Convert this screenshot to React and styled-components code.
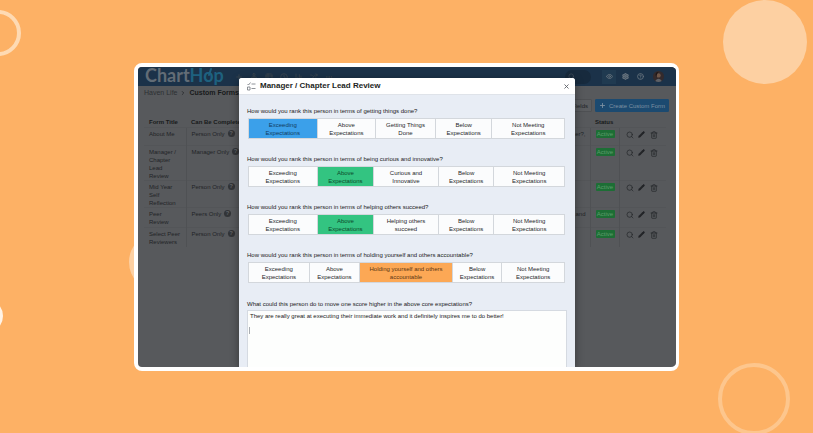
import React from "react";
import styled, { createGlobalStyle, css } from "styled-components";
import {
  Search, Pencil, Trash2, Plus, X, Eye, Settings, CircleHelp, ChevronRight,
  Network, BarChart3, Table2, Clock, Shuffle, Ellipsis,
} from "lucide-react";

const GlobalStyle = createGlobalStyle`
  * { box-sizing: border-box; }
  body {
    margin: 0;
    background: #fdb165;
    font-family: "Liberation Sans", Arial, sans-serif;
    font-size: 6px;
    line-height: 8px;
    color: #222;
  }
  button, textarea { font: inherit; color: inherit; margin: 0; }
`;

const Stage = styled.main`
  position: relative;
  overflow: hidden;
  min-height: 100vh;
  padding: 63px 134px 62px;
`;

const Bubble = styled.span`
  position: absolute;
  border-radius: 50%;
  width: ${(p) => p.$size}px;
  height: ${(p) => p.$size}px;
  ${(p) => p.$place}
  ${(p) => (p.$ring ? css`border: 4px solid ${p.$color};` : css`background: ${p.$color};`)}
`;

const Frame = styled.section`
  position: relative;
  display: grid;
  grid-template-columns: minmax(0, 1fr);
  border: solid #fff;
  border-width: 4px 3px 4px 4px;
  border-radius: 8px;
  background: #57595c;
  overflow: hidden;
`;

const Page = styled.div`
  grid-area: 1 / 1;
  color: #222427;
`;

const NavBar = styled.header`
  display: flex;
  align-items: center;
  height: 19px;
  padding: 0 12px 0 7px;
  background: #1b3249;
`;

const Logo = styled.a`
  position: relative;
  align-self: flex-start;
  width: 90px;
  font-family: Lato, sans-serif;
  font-size: 18px;
  font-weight: 700;
  line-height: 16px;
  color: #626c76;
  text-decoration: none;
  b { font-weight: 700; color: #1e617f; }
`;

const Leaf = styled.svg`
  position: absolute;
  top: 0;
  left: 61px;
  width: 8px;
  height: 12px;
`;

const NavLinks = styled.nav`
  display: flex;
  flex: 1;
  gap: 7px;
`;

const IconButton = styled.button`
  display: grid;
  place-items: center;
  width: ${(p) => p.$size || 8}px;
  height: ${(p) => p.$size || 8}px;
  padding: 0;
  border: 0;
  background: ${(p) => p.$bg || "none"};
  color: ${(p) => p.$color || "#35434f"};
`;

const NavSearch = styled.button`
  display: flex;
  align-items: center;
  width: 26px;
  height: 14px;
  margin-right: 11px;
  padding: 0 3px;
  border: 0;
  border-radius: 7px;
  background: #172a3d;
  color: #46525f;
`;

const NavTools = styled.div`
  display: flex;
  align-items: center;
  gap: 3px;
`;

const Avatar = styled.svg`
  width: 11px;
  height: 11px;
  margin-left: 4px;
`;

const Crumbs = styled.nav`
  display: flex;
  align-items: center;
  gap: 3px;
  padding: 3px 6px 0;
  font-size: 7px;
  a { color: #2d3033; text-decoration: none; }
  strong { color: #17191b; }
`;

const Actions = styled.div`
  display: flex;
  justify-content: flex-end;
  padding: 2px 7px 0 0;
  gap: 3px;
`;

const ActionButton = styled.button`
  display: flex;
  align-items: center;
  justify-content: center;
  gap: 3px;
  height: 13px;
  padding: 0 3px;
  border: 1px solid ${(p) => (p.$primary ? "#1c4a70" : "#4e5053")};
  border-radius: 1px;
  background: ${(p) => (p.$primary ? "#1c4a70" : "#5b5d60")};
  color: ${(p) => (p.$primary ? "#7e91a2" : "#222427")};
  white-space: nowrap;
`;

const FormsTable = styled.table`
  width: calc(100% - 16px);
  margin: 4px 10px 0 6px;
  border-collapse: collapse;
  table-layout: fixed;
  th, td {
    padding: 2px 4px 0 5px;
    text-align: left;
    vertical-align: top;
  }
  th { height: 11px; font-weight: 700; color: #17191b; white-space: nowrap; }
  tbody td { border-top: 1px solid #535558; }
  td + td { border-left: 1px solid #4f5154; }
`;

const Col = styled.col`
  width: ${(p) => (p.$w ? `${p.$w}px` : "auto")};
`;

const Row = styled.tr`
  height: ${(p) => p.$h}px;
`;

const Audience = styled.div`
  display: flex;
  align-items: center;
  gap: 3px;
`;

const Help = styled.span`
  width: 7px;
  height: 7px;
  border-radius: 50%;
  background: #323437;
  color: #626467;
  font-weight: 700;
  line-height: 7px;
  text-align: center;
`;

const Excerpt = styled.div`
  text-align: right;
  white-space: nowrap;
`;

const Badge = styled.span`
  display: block;
  width: 19px;
  border-radius: 1px;
  background: #1d6e35;
  color: #5d9c6d;
  text-align: center;
`;

const RowTools = styled.div`
  display: flex;
  gap: 2px;
`;

const Modal = styled.div`
  grid-area: 1 / 1;
  z-index: 1;
  display: flex;
  flex-direction: column;
  margin: 11px 101px 0;
  border-radius: 3px 3px 0 0;
  background: #e8edf5;
  box-shadow: 0 2px 8px rgba(0, 0, 0, 0.4);
  overflow: hidden;
`;

const ModalHeader = styled.header`
  display: flex;
  align-items: center;
  gap: 4px;
  height: 17px;
  padding: 0 5px 0 8px;
  border-bottom: 1px solid #dfe3e9;
  background: #fff;
`;

const ChecklistIcon = styled.svg`
  width: 9px;
  height: 9px;
`;

const Title = styled.h1`
  flex: 1;
  margin: 0;
  font-size: 8px;
  line-height: 10px;
  color: #1c1e22;
`;

const Form = styled.form`
  display: flex;
  flex-direction: column;
  gap: 16px;
  padding: 12px 8px 0;
`;

const Question = styled.fieldset`
  min-width: 0;
  margin: 0;
  padding: 0;
  border: 0;
  legend { padding: 0; margin-bottom: 3px; white-space: nowrap; }
`;

const Scale = styled.div`
  display: grid;
  grid-template-columns: ${(p) => p.$columns};
  margin: 0 2px 0 1px;
  border: 1px solid #d3d7dc;
`;

const tones = {
  blue: ["#3ba0ea", "#123c5e"],
  green: ["#33c481", "#0c4a2c"],
  orange: ["#fca855", "#5c3612"],
};

const Choice = styled.button`
  height: 19px;
  padding: 0;
  border: 0;
  background: ${(p) => (p.$tone ? tones[p.$tone][0] : "#fbfcfd")};
  color: ${(p) => (p.$tone ? tones[p.$tone][1] : "#26282b")};
  line-height: 8px;
  white-space: pre-line;
  & + & { border-left: 1px solid #d3d7dc; }
`;

const Comment = styled.div`
  position: relative;
  display: flex;
  flex-direction: column;
  gap: 2px;
  padding-top: 1px;
`;

const TextBox = styled.textarea`
  display: block;
  width: 100%;
  height: 57px;
  padding: 1px 2px;
  border: 1px solid #d5dae1;
  border-bottom: 0;
  background: #fdfefd;
  resize: none;
  outline: none;
`;

const Caret = styled.span`
  position: absolute;
  left: 2px;
  top: 28px;
  width: 1px;
  height: 7px;
  background: #a9adb2;
`;

const navIcons = [
  ["Add", Plus], ["Org chart", Network], ["Table", Table2], ["Timeline", Clock],
  ["Reports", BarChart3], ["Changes", Shuffle], ["More", Ellipsis],
];

const rows = [
  { title: "About Me", who: "Person Only", note: "user?,", h: 18 },
  { title: "Manager / Chapter Lead Review", who: "Manager Only", h: 35 },
  { title: "Mid Year Self Reflection", who: "Person Only", h: 27 },
  { title: "Peer Review", who: "Peers Only", note: "and", h: 20 },
  { title: "Select Peer Reviewers", who: "Person Only", h: 20 },
];

const EXCEEDING = "Exceeding\nExpectations";
const ABOVE = "Above\nExpectations";
const BELOW = "Below\nExpectations";
const NOT_MEETING = "Not Meeting\nExpectations";

const questions = [
  { text: "getting things done?", middle: "Getting Things\nDone", picked: 0, tone: "blue", columns: "68fr 59fr 60fr 57fr 73fr" },
  { text: "being curious and innovative?", middle: "Curious and\nInnovative", picked: 1, tone: "green", columns: "68fr 57fr 65fr 56fr 71fr" },
  { text: "helping others succeed?", middle: "Helping others\nsucceed", picked: 1, tone: "green", columns: "68fr 57fr 65fr 56fr 71fr" },
  { text: "holding yourself and others accountable?", middle: "Holding yourself and others\naccountable", picked: 2, tone: "orange", columns: "60fr 51fr 93fr 50fr 63fr" },
];

export default function App() {
  return (
    <Stage>
      <GlobalStyle />
      <Bubble $size={46} $ring $color="#fedab3" $place="left: -25px; top: 10px;" />
      <Bubble $size={84} $color="#fdd0a2" $place="right: 6px; top: 0;" />
      <Bubble $size={72} $ring $color="#fdc68d" $place="right: 23px; bottom: -2px;" />
      <Bubble $size={34} $ring $color="#fff3e6" $place="left: -31px; top: 299px;" />
      <Bubble $size={60} $color="#fdd0a2" $place="left: 129px; top: 232px;" />

      <Frame>
        <Page>
          <NavBar>
            <Logo href="#">
              Chart<b>Hop</b>
              <Leaf viewBox="0 0 8 12" aria-hidden="true">
                <path d="M3 8 L5 2" stroke="#1e617f" strokeWidth="2" strokeLinecap="round" />
              </Leaf>
            </Logo>
            <NavLinks>
              {navIcons.map(([name, Icon]) => (
                <IconButton key={name} type="button" aria-label={name}>
                  <Icon size={8} strokeWidth={3} />
                </IconButton>
              ))}
            </NavLinks>
            <NavSearch type="button" aria-label="Search"><Search size={7} /></NavSearch>
            <NavTools>
              <IconButton type="button" aria-label="View" $size={14} $bg="#203a50" $color="#66727d"><Eye size={7} strokeWidth={3} /></IconButton>
              <IconButton type="button" aria-label="Settings" $size={12} $color="#66727d"><Settings size={7} strokeWidth={4} /></IconButton>
              <IconButton type="button" aria-label="Help" $size={12} $color="#66727d"><CircleHelp size={7} strokeWidth={3} /></IconButton>
              <Avatar viewBox="0 0 10 10" role="img" aria-label="Profile">
                <circle cx="5" cy="5" r="5" fill="#332a2c" />
                <ellipse cx="5" cy="4" rx="2" ry="2" fill="#6f5648" />
                <path d="M2 9 Q5 5 8 9 Q5 11 2 9Z" fill="#5c6067" />
                <path d="M3 6 Q1 1 5 1 Q3 3 3 8Z" fill="#1f1717" />
              </Avatar>
            </NavTools>
          </NavBar>

          <Crumbs aria-label="Breadcrumb">
            <a href="#">Haven Life</a>
            <ChevronRight size={6} strokeWidth={3} />
            <strong>Custom Forms</strong>
          </Crumbs>

          <Actions>
            <ActionButton type="button">Manage Fields</ActionButton>
            <ActionButton type="button" $primary><Plus size={7} strokeWidth={3} />Create Custom Form</ActionButton>
          </Actions>

          <FormsTable>
            <colgroup>
              <Col $w={42} /><Col $w={100} /><Col /><Col $w={29} /><Col $w={47} />
            </colgroup>
            <thead>
              <tr>
                <th>Form Title</th>
                <th>Can Be Completed</th>
                <th aria-label="Questions" />
                <th>Status</th>
                <th aria-label="Actions" />
              </tr>
            </thead>
            <tbody>
              {rows.map((r) => (
                <Row key={r.title} $h={r.h}>
                  <td>{r.title}</td>
                  <td><Audience>{r.who}<Help>?</Help></Audience></td>
                  <td><Excerpt>{r.note}</Excerpt></td>
                  <td><Badge>Active</Badge></td>
                  <td>
                    <RowTools>
                      <IconButton type="button" aria-label="View form" $size={10} $color="#232528"><Search size={8} strokeWidth={2} /></IconButton>
                      <IconButton type="button" aria-label="Edit form" $size={10} $color="#232528"><Pencil size={7} strokeWidth={2} fill="currentColor" /></IconButton>
                      <IconButton type="button" aria-label="Delete form" $size={10} $color="#232528"><Trash2 size={8} strokeWidth={2} /></IconButton>
                    </RowTools>
                  </td>
                </Row>
              ))}
            </tbody>
          </FormsTable>
        </Page>

        <Modal role="dialog" aria-labelledby="review-title">
          <ModalHeader>
            <ChecklistIcon viewBox="0 0 18 18" fill="none" stroke="#6a6f76" strokeWidth="1.5" aria-hidden="true">
              <path d="M1 4 L3 6 L7 1 M9 4 H17 M9 13 H17 M1 10 H6 V16 H1 Z" />
            </ChecklistIcon>
            <Title id="review-title">Manager / Chapter Lead Review</Title>
            <IconButton type="button" aria-label="Close" $color="#5a5e65"><X size={7} strokeWidth={3} /></IconButton>
          </ModalHeader>
          <Form>
            {questions.map((q) => (
              <Question key={q.text}>
                <legend>How would you rank this person in terms of {q.text}</legend>
                <Scale $columns={q.columns}>
                  {[EXCEEDING, ABOVE, q.middle, BELOW, NOT_MEETING].map((label, i) => (
                    <Choice
                      key={label}
                      type="button"
                      aria-pressed={i === q.picked}
                      $tone={i === q.picked ? q.tone : undefined}
                    >
                      {label}
                    </Choice>
                  ))}
                </Scale>
              </Question>
            ))}
            <Comment>
              <label htmlFor="comment">What could this person do to move one score higher in the above core expectations?</label>
              <TextBox
                id="comment"
                defaultValue="They are really great at executing their immediate work and it definitely inspires me to do better!"
              />
              <Caret />
            </Comment>
          </Form>
        </Modal>
      </Frame>
    </Stage>
  );
}
